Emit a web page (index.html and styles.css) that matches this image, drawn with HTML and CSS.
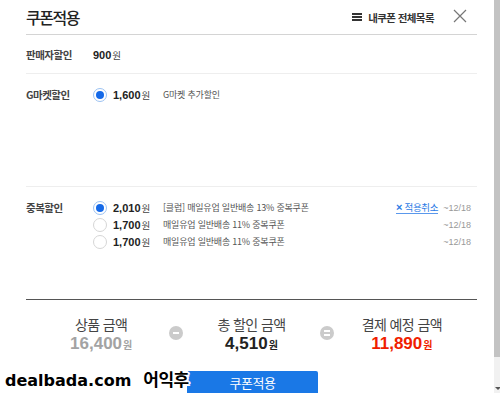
FILE: index.html
```html
<!DOCTYPE html>
<html lang="ko">
<head>
  <meta charset="UTF-8" />
  <meta name="viewport" content="width=device-width, initial-scale=1.0" />
  <title>쿠폰적용</title>
  <link rel="stylesheet" href="styles.css">
</head>
<body>
  <div class="page">
    <div class="popup">
      <div class="pop-head">
        <h1 class="pop-title">쿠폰적용</h1>
        <a class="my-coupon" href="#"><span class="ico-menu"></span>내쿠폰 전체목록</a>
        <button class="btn-close" type="button" aria-label="닫기">
          <svg width="14" height="14" viewBox="0 0 14 14">
            <path d="M1 1 L13 13 M13 1 L1 13" stroke="#777" stroke-width="1.2" fill="none" />
          </svg>
        </button>
      </div>

      <div class="row row-seller">
        <div class="row-label">판매자할인</div>
        <div class="row-body">
          <div class="opt">
            <span class="price">900<em>원</em></span>
          </div>
        </div>
      </div>

      <div class="row row-gmarket">
        <div class="row-label">G마켓할인</div>
        <div class="row-body">
          <div class="opt">
            <span class="radio checked"></span>
            <span class="price">1,600<em>원</em></span>
            <span class="desc">G마켓 추가할인</span>
          </div>
        </div>
      </div>

      <div class="row row-dup">
        <div class="row-label">중복할인</div>
        <div class="row-body">
          <div class="opt">
            <span class="radio checked"></span>
            <span class="price">2,010<em>원</em></span>
            <span class="desc">[클럽] 매일유업 일반배송 13% 중복쿠폰</span>
            <a class="cancel" href="#"><b>×</b> 적용취소</a>
            <span class="date">~12/18</span>
          </div>
          <div class="opt">
            <span class="radio"></span>
            <span class="price">1,700<em>원</em></span>
            <span class="desc">매일유업 일반배송 11% 중복쿠폰</span>
            <span class="date">~12/18</span>
          </div>
          <div class="opt">
            <span class="radio"></span>
            <span class="price">1,700<em>원</em></span>
            <span class="desc">매일유업 일반배송 11% 중복쿠폰</span>
            <span class="date">~12/18</span>
          </div>
        </div>
      </div>

      <div class="summary">
        <div class="sum-col">
          <div class="sum-label">상품 금액</div>
          <div class="sum-value gray">16,400<em>원</em></div>
        </div>
        <div class="sum-op"><span class="op minus"></span></div>
        <div class="sum-col">
          <div class="sum-label">총 할인 금액</div>
          <div class="sum-value">4,510<em>원</em></div>
        </div>
        <div class="sum-op"><span class="op equal"></span></div>
        <div class="sum-col">
          <div class="sum-label">결제 예정 금액</div>
          <div class="sum-value red">11,890<em>원</em></div>
        </div>
      </div>

      <div class="actions">
        <button class="btn-apply" type="button">쿠폰적용</button>
      </div>
    </div>

    <div class="scrollbar">
      <div class="thumb"></div>
      <div class="arrow"></div>
    </div>
  </div>

  <div class="watermark"><span class="wm-site">dealbada.com</span><span class="wm-word">어익후</span></div>
</body>
</html>
```

FILE: styles.css
```css
* {
  box-sizing: border-box;
}
html, body {
  margin: 0;
  height: 393px;
  overflow: hidden;
}
body {
  font-family: 'Noto Sans CJK KR', 'Liberation Sans', sans-serif;
  background: #fff;
  color: #333;
  position: relative;
}
.page {
  display: flex;
  height: 393px;
}
.popup {
  flex: 1;
  padding: 0 17px 0 26px;
}

/* header */
.pop-head {
  display: flex;
  align-items: center;
  height: 35px;
  border-bottom: 1px solid #d4d4d4;
}
.pop-title {
  margin: 0 auto 1px 0;
  font-size: 16px;
  font-weight: 500;
  letter-spacing: -1.5px;
  color: #222;
  line-height: 20px;
}
.my-coupon {
  display: flex;
  align-items: center;
  font-size: 10.5px;
  font-weight: 700;
  color: #333;
  letter-spacing: -0.6px;
  text-decoration: none;
}
.ico-menu {
  width: 10px;
  height: 8px;
  margin-right: 6px;
  border-top: 2px solid #333;
  border-bottom: 2px solid #333;
  position: relative;
}
.ico-menu::after {
  content: '';
  position: absolute;
  left: 0;
  right: 0;
  top: 1px;
  height: 2px;
  background: #333;
}
.btn-close {
  margin: 0 10px 2px 19px;
  padding: 0;
  border: none;
  background: none;
  width: 14px;
  height: 14px;
  display: flex;
}

/* rows */
.row {
  display: flex;
  border-bottom: 1px solid #eee;
}
.row-seller {
  height: 39px;
  padding-top: 11px;
}
.row-gmarket {
  height: 113px;
  padding-top: 12px;
}
.row-dup {
  height: 113px;
  padding-top: 12px;
  border-bottom: 1px solid #555;
}
.row-label {
  width: 67px;
  flex: none;
  font-size: 10.5px;
  font-weight: 700;
  color: #444;
  letter-spacing: -0.5px;
  line-height: 17px;
}
.row-body {
  flex: 1;
  padding-right: 6px;
}
.opt {
  display: flex;
  align-items: center;
  height: 17px;
}
.radio {
  width: 14px;
  height: 14px;
  border-radius: 50%;
  border: 1px solid #d6d6d6;
  background: #fff;
  margin-right: 6px;
  flex: none;
  position: relative;
}
.radio.checked {
  border-color: #9cc2f2;
}
.radio.checked::after {
  content: '';
  position: absolute;
  left: 2px;
  top: 2px;
  width: 8px;
  height: 8px;
  border-radius: 50%;
  background: #1469e8;
}
.price {
  width: 50px;
  flex: none;
  font-family: 'Liberation Sans', sans-serif;
  font-size: 11px;
  font-weight: 700;
  color: #222;
}
.price em {
  font-style: normal;
  font-family: 'Noto Sans CJK KR', sans-serif;
  font-weight: 400;
  font-size: 9.5px;
  color: #444;
  margin-left: 1px;
}
.desc {
  font-size: 9px;
  color: #555;
  letter-spacing: -0.2px;
}
.cancel {
  margin-left: auto;
  font-size: 9.5px;
  color: #2c7be5;
  text-decoration: none;
  border-bottom: 1px solid #5a98ec;
  line-height: 12px;
  letter-spacing: -0.3px;
}
.cancel b {
  font-family: 'Liberation Sans', sans-serif;
  font-size: 11px;
}
.date {
  margin-left: 5px;
  font-family: 'Liberation Sans', sans-serif;
  font-size: 9px;
  color: #999;
}
.opt .desc + .date {
  margin-left: auto;
}

/* summary */
.summary {
  display: grid;
  grid-template-columns: 1fr 0 1fr 0 1fr;
  padding-top: 15px;
  height: 71px;
}
.sum-col {
  text-align: center;
}
.sum-label {
  font-size: 14px;
  color: #444;
  letter-spacing: -0.6px;
  line-height: 19px;
}
.sum-value {
  font-family: 'Liberation Sans', sans-serif;
  font-size: 17px;
  font-weight: 700;
  color: #222;
  line-height: 20px;
}
.sum-value em {
  font-style: normal;
  font-family: 'Noto Sans CJK KR', sans-serif;
  font-size: 10px;
  font-weight: 700;
  margin-left: 1px;
}
.sum-value.gray {
  color: #a3a3a3;
}
.sum-value.red {
  color: #f01e00;
}
.sum-op {
  display: flex;
  justify-content: center;
  padding-top: 11px;
}
.op {
  flex: none;
  width: 14px;
  height: 14px;
  border-radius: 50%;
  background: #cbcbcb;
  position: relative;
}
.op::before,
.op::after {
  content: '';
  position: absolute;
  left: 4px;
  width: 6px;
  height: 2px;
  background: #fff;
}
.op.minus::before {
  top: 6px;
}
.op.minus::after {
  display: none;
}
.op.equal::before {
  top: 4px;
}
.op.equal::after {
  top: 8px;
}

/* actions */
.actions {
  display: flex;
  justify-content: center;
  padding-left: 2px;
}
.btn-apply {
  width: 131px;
  height: 32px;
  border: none;
  border-radius: 2px 2px 0 0;
  background: #1a78e6;
  color: #fff;
  font-family: 'Noto Sans CJK KR', sans-serif;
  font-size: 13px;
  letter-spacing: -0.5px;
  line-height: 24px;
  padding: 0 0 8px;
}

/* fake scrollbar */
.scrollbar {
  width: 6px;
  flex: none;
  background: #f1f1f1;
  display: flex;
  flex-direction: column;
}
.thumb {
  height: 357px;
  background: #c3c3c3;
}
.arrow {
  margin-top: auto;
  margin-bottom: 3px;
  margin-left: 1px;
  width: 0;
  height: 0;
  border-left: 3px solid transparent;
  border-right: 3px solid transparent;
  border-top: 3px solid #555;
}

/* watermark overlay */
.watermark {
  position: absolute;
  left: 5px;
  top: 366px;
  display: flex;
  align-items: baseline;
  gap: 12px;
  font-weight: 700;
  color: #000;
  white-space: nowrap;
  text-shadow:
    -2px 0 #fff, 2px 0 #fff, 0 -2px #fff, 0 2px #fff,
    -1.5px -1.5px #fff, 1.5px -1.5px #fff, -1.5px 1.5px #fff, 1.5px 1.5px #fff;
}
.wm-site {
  font-family: 'DejaVu Sans', sans-serif;
  font-size: 16px;
}
.wm-word {
  font-family: 'Noto Sans CJK KR', sans-serif;
  font-size: 17px;
  letter-spacing: -0.5px;
}
```
